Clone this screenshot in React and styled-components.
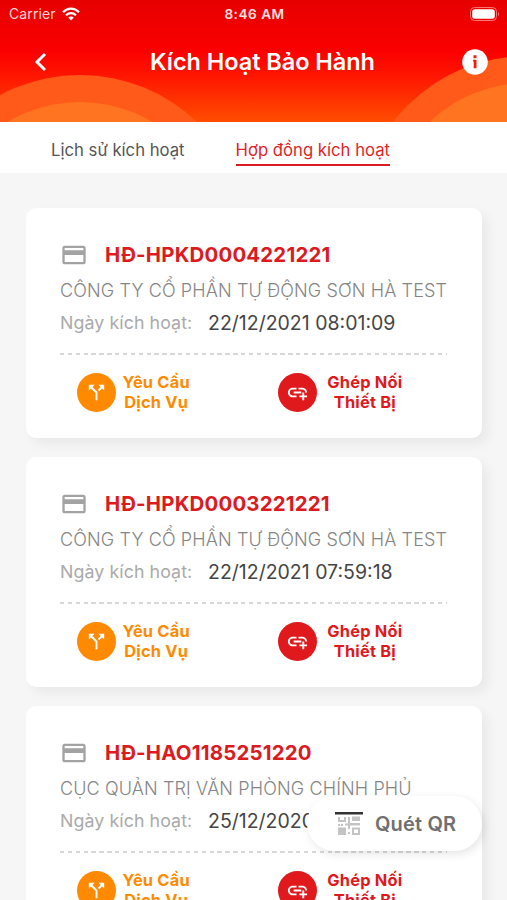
import React from 'react'
import styled, { createGlobalStyle } from 'styled-components'
import { MdAddLink, MdCallSplit, MdOutlineCreditCard } from 'react-icons/md'

const GlobalStyle = createGlobalStyle`
* { box-sizing: border-box; }
body { margin: 0; overflow: hidden; background: #f6f6f6; font-family: Inter, Roboto, sans-serif; }
h1, h2, p { margin: 0; }
button { border: none; background: none; padding: 0; font-family: inherit; cursor: pointer; }
`;

const Screen = styled.div`width: 507px;
height: 900px;
display: flex;
flex-direction: column;
overflow: hidden;
background: #f6f6f6;`;

const Header = styled.header`position: relative;
height: 122px;
flex: none;
color: white;
background: linear-gradient(180deg, #e60000 0%, #fb0000 42%, #ff1500 62%, #ff4d00 100%);`;
const Waves = styled.svg`position: absolute;
top: 0;
left: 0;`;
const StatusBar = styled.div`position: relative;
height: 27px;
padding: 0 7px 0 9px;
display: grid;
grid-template-columns: 1fr auto 1fr;
align-items: center;`;
const Carrier = styled.div`display: flex;
align-items: center;
gap: 6px;
font-size: 14px;
letter-spacing: 0.1px;
color: #ffd5d5;`;
const Clock = styled.span`font-size: 13.6px;
font-weight: 600;
letter-spacing: 0.5px;
color: #ffe0e0;`;
const Battery = styled.svg`justify-self: end;`;
const NavBar = styled.div`position: relative;
height: 69px;
padding: 0 19px 0 32px;
display: grid;
grid-template-columns: 40px 1fr 40px;
align-items: center;`;
const NavButton = styled.button`display: flex;
justify-content: ${(p) => (p.$end ? 'flex-end' : 'flex-start')};`;
const Title = styled.h1`font-size: 23.5px;
line-height: 28px;
font-weight: 600;
letter-spacing: -0.05px;
text-align: center;
white-space: nowrap;
margin-left: -14px;
margin-right: -19px;`;

const Tabs = styled.nav`height: 51px;
flex: none;
display: flex;
align-items: flex-start;
gap: 51px;
padding: 16px 0 0 51px;
background: white;`;
const Tab = styled.button`height: 28px;
display: flex;
align-items: flex-start;
padding-top: 1px;
font-size: 16.7px;
line-height: 22px;
white-space: nowrap;
color: ${(p) => (p.$active ? '#df2428' : '#555')};
border-bottom: ${(p) => (p.$active ? '2px solid #d91c20' : 'none')};`;

const List = styled.main`display: flex;
flex-direction: column;
gap: 19px;
padding: 34.5px 25px 0 26px;`;
const Card = styled.article`height: 230px;
flex: none;
padding: 34px 35px 0 34px;
border-radius: 10px;
background: white;
box-shadow: 6px 6px 12px rgba(0, 0, 0, 0.055);`;
const CardHead = styled.div`height: 26px;
display: flex;
align-items: center;
gap: 17px;
color: #a3a3a3;`;
const Code = styled.h2`font-size: 20.4px;
line-height: 26px;
font-weight: 700;
white-space: nowrap;
letter-spacing: 0.2px;
color: #dc1b1f;`;
const Company = styled.p`margin-top: 10px;
font-size: 18px;
line-height: 26px;
font-weight: 300;
white-space: nowrap;
letter-spacing: 0.12px;
color: #858585;`;
const DateRow = styled.div`margin-top: 6px;
height: 26px;
display: flex;
align-items: center;
gap: 15px;
white-space: nowrap;`;
const DateLabel = styled.span`width: 133px;
font-size: 17.8px;
letter-spacing: 0.08px;
color: #aaa;`;
const DateValue = styled.span`padding-top: 1px;
font-size: 19.5px;
color: #454545;`;
const Divider = styled.div`height: 2px;
margin-top: 17px;
background: repeating-linear-gradient(90deg, #d8d8d8 0 4.4px, transparent 4.4px 7.87px);`;
const Actions = styled.div`margin-top: 17.5px;
padding-left: 16.5px;
display: flex;
gap: 88.5px;`;
const Action = styled.button`display: flex;
align-items: center;
gap: ${(p) => p.$gap};
color: ${(p) => p.$color};`;
const Round = styled.span`width: 39px;
height: 39px;
border-radius: 50%;
display: flex;
align-items: center;
justify-content: center;
color: white;
background: ${(p) => p.$color};`;
const ActionText = styled.span`font-size: 16.4px;
line-height: 20px;
font-weight: 700;
text-align: center;
white-space: nowrap;
letter-spacing: 0.2px;`;

const ScanButton = styled.button`position: absolute;
left: 307px;
top: 796px;
width: 175px;
height: 55px;
border-radius: 28px;
display: flex;
align-items: center;
gap: 12px;
padding-left: 28px;
font-size: 20px;
font-weight: 600;
letter-spacing: 0.15px;
white-space: nowrap;
color: #707070;
background: white;
box-shadow: 2px 3px 10px rgba(0, 0, 0, 0.1);`;

const contracts = [
  { id: 1, code: 'HĐ-HPKD0004221221', company: 'CÔNG TY CỔ PHẦN TỰ ĐỘNG SƠN HÀ TEST', date: '22/12/2021 08:01:09' },
  { id: 2, code: 'HĐ-HPKD0003221221', company: 'CÔNG TY CỔ PHẦN TỰ ĐỘNG SƠN HÀ TEST', date: '22/12/2021 07:59:18' },
  { id: 3, code: 'HĐ-HAO1185251220', company: 'CỤC QUẢN TRỊ VĂN PHÒNG CHÍNH PHỦ', date: '25/12/2020' },
]

function WifiIcon() {
  return (
    <svg width="18" height="14" viewBox="0 0 18 14" fill="none" stroke="white" strokeWidth="2.2">
      <path d="M1 5.2C5.7 .5 12.3 .5 17 5.2" />
      <path d="M4 8.3C6.9 5.5 11.1 5.5 14 8.3" />
      <path d="M6.2 10.6C7.8 9.2 10.2 9.2 11.8 10.6L9 13.5Z" fill="white" stroke="none" />
    </svg>
  )
}

function QrIcon() {
  return (
    <svg width="28" height="24" viewBox="0 0 28 24" fill="#c4c4c4">
      <path d="M0 0H28V2.5H0Z" fill="#333" />
      <path d="M3 5H5V8H9V5H11V10H3Z" />
      <path d="M17 4.5H25V9H17ZM13 5H15V11H25V13.5H15V17H13V13.5H10V11.5H13ZM3 12H5V14H3ZM6 12H8V14H6Z" />
      <path d="M3 15.5H11V23H3ZM13 20H15V22H13Z" />
      <path d="M17 15.5H25V23H17ZM19 17.5V21H23V17.5Z" fillRule="evenodd" />
    </svg>
  )
}

function ContractCard({ item }) {
  return (
    <Card>
      <CardHead>
        <MdOutlineCreditCard size={28} />
        <Code>{item.code}</Code>
      </CardHead>
      <Company>{item.company}</Company>
      <DateRow>
        <DateLabel>Ngày kích hoạt:</DateLabel>
        <DateValue>{item.date}</DateValue>
      </DateRow>
      <Divider />
      <Actions>
        <Action $color="#ff8a00" $gap="7px">
          <Round $color="#ff8a00"><MdCallSplit size={23} /></Round>
          <ActionText>Yêu Cầu<br />Dịch Vụ</ActionText>
        </Action>
        <Action $color="#df191c" $gap="10px">
          <Round $color="#df191c"><MdAddLink size={23} /></Round>
          <ActionText>Ghép Nối<br />Thiết Bị</ActionText>
        </Action>
      </Actions>
    </Card>
  )
}

function App() {
  return (
    <Screen>
      <GlobalStyle />
      <Header>
        <Waves width="507" height="122" viewBox="0 0 507 122">
          <g fill="#ff5a1a">
            <circle cx="80" cy="244" r="169" />
            <circle cx="527" cy="225" r="169" />
          </g>
          <g fill="#ff7420">
            <circle cx="80" cy="244" r="142" />
            <circle cx="527" cy="225" r="142" />
          </g>
        </Waves>
        <StatusBar>
          <Carrier>Carrier <WifiIcon /></Carrier>
          <Clock>8:46 AM</Clock>
          <Battery width="30" height="14" viewBox="0 0 30 14">
            <rect x=".5" y=".5" width="26" height="13" rx="4" fill="none" stroke="#ff7777" />
            <rect x="2.2" y="2.2" width="22.6" height="9.6" rx="2.5" fill="white" />
            <path d="M28 4.7Q30 7 28 9.3Z" fill="#ff7777" />
          </Battery>
        </StatusBar>
        <NavBar>
          <NavButton aria-label="Back">
            <svg width="16" height="20" viewBox="0 0 16 20" fill="none" stroke="white" strokeWidth="3">
              <path d="M13 2L5 10L13 18" />
            </svg>
          </NavButton>
          <Title>Kích Hoạt Bảo Hành</Title>
          <NavButton aria-label="Info" $end>
            <svg width="26" height="26" viewBox="0 0 26 26">
              <circle cx="13" cy="13" r="12.8" fill="white" />
              <path d="M11.5 6.3H14.5V9.2H11.5ZM11 10.8H14.5V19.3H11.7V12.5H11Z" fill="#f51c08" />
            </svg>
          </NavButton>
        </NavBar>
      </Header>
      <Tabs>
        <Tab>Lịch sử kích hoạt</Tab>
        <Tab $active>Hợp đồng kích hoạt</Tab>
      </Tabs>
      <List>
        {contracts.map((item) => (
          <ContractCard key={item.id} item={item} />
        ))}
      </List>
      <ScanButton><QrIcon />Quét QR</ScanButton>
    </Screen>
  )
}

export default App
